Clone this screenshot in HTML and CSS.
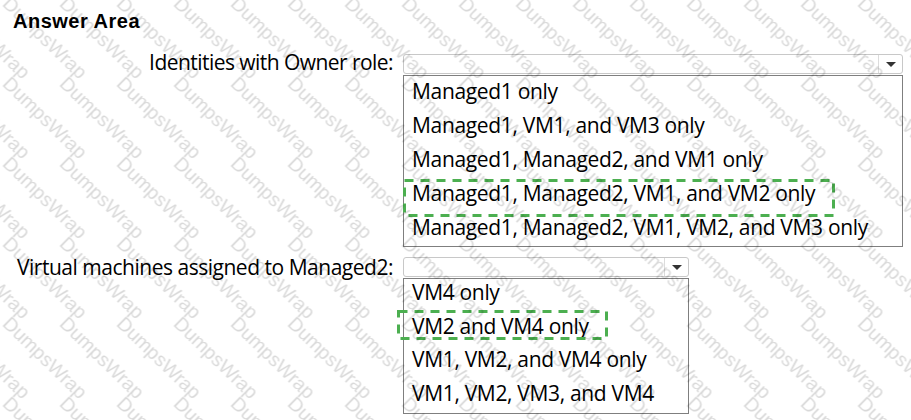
FILE: index.html
```html
<!DOCTYPE html>
<html lang="en">
<head>
<meta charset="utf-8">
<title>Answer Area</title>
<link rel="stylesheet" href="styles.css">
</head>
<body>
<main class="answer-area">
  <h1 class="title">Answer Area</h1>

  <section class="question q-owner">
    <div class="label">Identities with Owner role:</div>
    <div class="control">
      <div class="select"><span class="select-arrow"></span></div>
      <ul class="options">
        <li>Managed1 only</li>
        <li>Managed1, VM1, and VM3 only</li>
        <li>Managed1, Managed2, and VM1 only</li>
        <li class="answer">Managed1, Managed2, VM1, and VM2 only
          <svg class="answer-mark" width="432" height="38" viewBox="0 0 432 38"><rect x="1.5" y="1.5" width="429" height="35" /></svg>
        </li>
        <li>Managed1, Managed2, VM1, VM2, and VM3 only</li>
      </ul>
    </div>
  </section>

  <section class="question q-vms">
    <div class="label">Virtual machines assigned to Managed2:</div>
    <div class="control">
      <div class="select"><span class="select-arrow"></span></div>
      <ul class="options">
        <li>VM4 only</li>
        <li class="answer">VM2 and VM4 only
          <svg class="answer-mark" width="211" height="30" viewBox="0 0 211 30"><rect x="1.5" y="1.5" width="208" height="27" /></svg>
        </li>
        <li>VM1, VM2, and VM4 only</li>
        <li>VM1, VM2, VM3, and VM4</li>
      </ul>
    </div>
  </section>
</main>

<svg class="watermark" width="911" height="420" aria-hidden="true">
  <defs>
    <pattern id="wm" x="1.5" y="5" width="57" height="80" patternUnits="userSpaceOnUse">
      <g font-family="Liberation Sans, Arial, sans-serif" font-size="19.5" fill="#000" fill-opacity="0.15">
        <text transform="translate(0 0) rotate(44)">DumpsWrap</text>
        <text transform="translate(-57 0) rotate(44)">DumpsWrap</text>
        <text transform="translate(0 80) rotate(44)">DumpsWrap</text>
        <text transform="translate(-57 80) rotate(44)">DumpsWrap</text>
        <text transform="translate(-114 0) rotate(44)">DumpsWrap</text>
        <text transform="translate(-114 80) rotate(44)">DumpsWrap</text>
      </g>
    </pattern>
  </defs>
  <rect width="911" height="420" fill="url(#wm)" />
</svg>
</body>
</html>
```

FILE: styles.css
```css
html, body {
  margin: 0;
  padding: 0;
  background: #ffffff;
}

body {
  width: 911px;
  height: 420px;
  overflow: hidden;
  position: relative;
  color: #000;
  font-family: "Open Sans", "Noto Sans", sans-serif;
}

.answer-area {
  padding-top: 11px;
}

.title {
  margin: 0 0 0 13px;
  font: bold 20px/20px "Liberation Sans", Arial, sans-serif;
  letter-spacing: 0.5px;
}

.question {
  display: flex;
  align-items: flex-start;
  gap: 10px;
}

.q-owner {
  margin-top: 23px;
}

.q-vms {
  margin-top: 10px;
}

.label {
  flex: none;
  width: 393px;
  text-align: right;
  font-size: 21px;
  line-height: 24px;
  white-space: nowrap;
}

.q-owner .label {
  margin-top: -4px;
  letter-spacing: -0.55px;
}

.q-vms .label {
  margin-top: -2px;
  letter-spacing: -0.48px;
}

.q-owner .control {
  width: 500px;
}

.q-vms .control {
  width: 286px;
}

.select {
  box-sizing: border-box;
  height: 20px;
  border: 1px solid #c8c8c8;
  border-radius: 3px;
  display: flex;
  justify-content: flex-end;
  background: #fff;
}

.select-arrow {
  width: 23px;
  border-left: 1px solid #dcdcdc;
  display: flex;
  align-items: center;
  justify-content: center;
}

.select-arrow::after {
  content: "";
  width: 0;
  height: 0;
  border-left: 5px solid transparent;
  border-right: 5px solid transparent;
  border-top: 5px solid #333;
}

.options {
  list-style: none;
  margin: 1px 0 0;
  padding: 0;
  border: 1px solid #7f7f7f;
}

.options li {
  position: relative;
  height: 34px;
  line-height: 30px;
  padding-left: 8px;
  font-size: 21px;
  letter-spacing: -0.33px;
  white-space: nowrap;
}

.q-vms .options li {
  height: 33.5px;
  line-height: 26px;
}

.answer-mark {
  position: absolute;
  overflow: visible;
}

.answer-mark rect {
  fill: none;
  stroke: #4caf50;
  stroke-width: 3;
  stroke-dasharray: 9 7;
}

.q-owner .answer-mark {
  left: -1px;
  top: 1px;
}

.q-vms .answer-mark {
  left: -7px;
  top: -3px;
}

.watermark {
  position: absolute;
  left: 0;
  top: 0;
  pointer-events: none;
}
```
